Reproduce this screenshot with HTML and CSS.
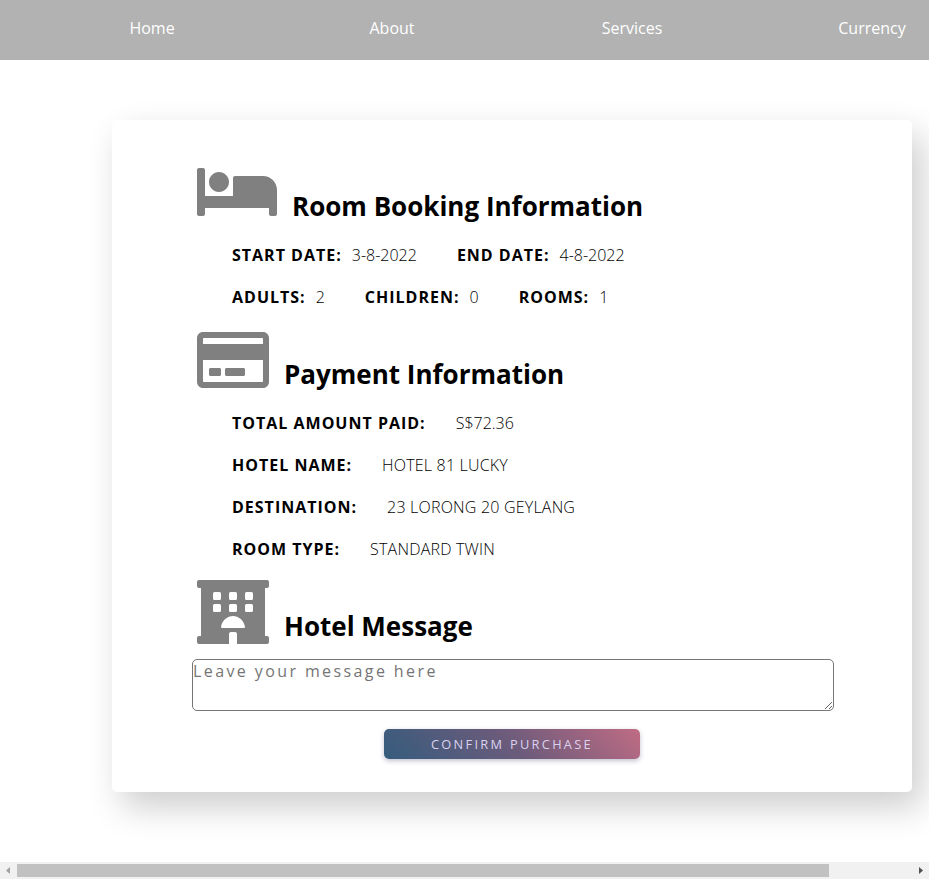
FILE: index.html
```html
<!DOCTYPE html>
<html lang="en">
<head>
<meta charset="utf-8">
<title>Booking confirmation</title>
<link rel="stylesheet" href="styles.css">
</head>
<body>
<div class="viewport">
  <div class="page">
    <nav class="nav">
      <a>Home</a><a>About</a><a>Services</a><a>Currency</a>
    </nav>
    <main class="card">
      <section>
        <header class="head head-bed">
          <svg class="bed" viewBox="0 0 640 512"><path d="M176 256c44.11 0 80-35.89 80-80s-35.89-80-80-80-80 35.89-80 80 35.89 80 80 80zm352-128H304c-8.84 0-16 7.16-16 16v144H64V80c0-8.84-7.16-16-16-16H16C7.16 64 0 71.16 0 80v352c0 8.84 7.16 16 16 16h32c8.84 0 16-7.16 16-16v-48h512v48c0 8.84 7.16 16 16 16h32c8.84 0 16-7.16 16-16V240c0-61.86-50.14-112-112-112z"/></svg>
          <h2>Room Booking Information</h2>
        </header>
        <div class="row tight"><b>START DATE:</b><span>3-8-2022</span><b>END DATE:</b><span>4-8-2022</span></div>
        <div class="row tight"><b>ADULTS:</b><span>2</span><b>CHILDREN:</b><span>0</span><b>ROOMS:</b><span>1</span></div>
      </section>
      <section>
        <header class="head head-pay">
          <svg viewBox="0 0 576 512"><path d="M527.9 32H48.1C21.5 32 0 53.5 0 80v352c0 26.5 21.5 48 48.1 48h479.8c26.6 0 48.1-21.5 48.1-48V80c0-26.5-21.5-48-48.1-48zM54.1 80h467.8c3.3 0 6 2.7 6 6v42H48.1V86c0-3.3 2.7-6 6-6zm467.8 352H54.1c-3.3 0-6-2.7-6-6V256h479.8v170c0 3.3-2.7 6-6 6zM192 332v40c0 6.6-5.4 12-12 12h-72c-6.6 0-12-5.4-12-12v-40c0-6.6 5.4-12 12-12h72c6.6 0 12 5.4 12 12zm192 0v40c0 6.6-5.4 12-12 12H236c-6.6 0-12-5.4-12-12v-40c0-6.6 5.4-12 12-12h136c6.6 0 12 5.4 12 12z"/></svg>
          <h2>Payment Information</h2>
        </header>
        <div class="row"><b>TOTAL AMOUNT PAID:</b><span>S$72.36</span></div>
        <div class="row detail"><b>HOTEL NAME:</b><span>HOTEL 81 LUCKY</span></div>
        <div class="row detail"><b>DESTINATION:</b><span>23 LORONG 20 GEYLANG</span></div>
        <div class="row detail"><b>ROOM TYPE:</b><span>STANDARD TWIN</span></div>
      </section>
      <section>
        <header class="head head-hotel">
          <svg viewBox="0 0 576 512"><path fill-rule="evenodd" d="M560 64c8.84 0 16-7.16 16-16V16c0-8.84-7.16-16-16-16H16C7.16 0 0 7.16 0 16v32c0 8.84 7.16 16 16 16h16v384H16c-8.84 0-16 7.16-16 16v32c0 8.84 7.16 16 16 16h240v-80c0-8.8 7.2-16 16-16h32c8.8 0 16 7.2 16 16v80h240c8.84 0 16-7.16 16-16v-32c0-8.84-7.16-16-16-16h-16V64zM140.800 96h38.400q12.800 0 12.800 12.800v38.400q0 12.800-12.800 12.800h-38.400q-12.800 0-12.800-12.800v-38.400q0-12.800 12.800-12.800zm128 0h38.400q12.800 0 12.800 12.800v38.400q0 12.800-12.800 12.800h-38.400q-12.800 0-12.800-12.800v-38.400q0-12.800 12.800-12.800zm128 0h38.400q12.800 0 12.800 12.800v38.400q0 12.800-12.800 12.800h-38.400q-12.800 0-12.800-12.800v-38.400q0-12.800 12.800-12.800zM140.800 192h38.400q12.800 0 12.800 12.800v38.400q0 12.800-12.800 12.800h-38.400q-12.800 0-12.800-12.800v-38.400q0-12.800 12.800-12.800zm128 0h38.400q12.800 0 12.800 12.800v38.400q0 12.800-12.800 12.800h-38.400q-12.800 0-12.800-12.800v-38.400q0-12.800 12.800-12.800zm128 0h38.400q12.800 0 12.800 12.800v38.400q0 12.800-12.800 12.800h-38.400q-12.800 0-12.800-12.800v-38.400q0-12.800 12.800-12.800zM203 384c-8.800 0-12-7-10-15 12-47 50-81 95-81s83 34 95 81c2 8-1 15-10 15z"/></svg>
          <h2>Hotel Message</h2>
        </header>
        <textarea class="message" placeholder="Leave your message here"></textarea>
        <button class="confirm">CONFIRM PURCHASE</button>
      </section>
    </main>
  </div>
  <div class="scrollbar">
    <svg viewBox="0 0 17 17"><path class="off" d="M10 5v7L6 8.500z"/></svg>
    <div class="track"><div class="thumb"></div></div>
    <svg viewBox="0 0 17 17"><path class="on" d="M7 5v7l4-3.500z"/></svg>
  </div>
</div>
</body>
</html>
```

FILE: styles.css
```css
* { box-sizing: border-box; }
body { margin: 0; font: 16px/24px "Open Sans", sans-serif; color: #000; }
.viewport { display: flex; flex-direction: column; height: 879px; width: 929px; overflow: hidden; background: #fff; }
.page { width: 1024px; flex: 1; min-height: 0; }
.nav { display: grid; grid-template-columns: repeat(4, 240px); width: 1024px; height: 60px; padding: 16px 0 0 32px; background: #b2b2b2; color: #fff; text-align: center; }
.card { width: 800px; height: 672px; margin: 60px auto 0; padding: 40px 78px 0 80px; background: #fff; border-radius: 5px; box-shadow: 10px 15px 35px rgba(0, 0, 0, .2); }
.head { display: flex; align-items: flex-start; padding-left: 5px; gap: 15px; }
.head svg { width: 72px; height: 64px; fill: #808080; flex: none; }
.head svg.bed { width: 80px; }
.head h2 { margin: 28px 0 0; font-size: 26px; line-height: 36px; font-weight: 700; white-space: nowrap; }
.head-bed { height: 74px; }
.head-pay { height: 74px; margin-top: 10px; }
.head-hotel { height: 79px; margin-top: 10px; }
.row { display: flex; height: 42px; padding: 9px 0 0 40px; white-space: nowrap; }
.row b { font-weight: 700; letter-spacing: 1px; }
.row span { font-weight: 300; margin-left: 30px; }
.detail span { letter-spacing: .2px; }
.tight span { margin: 0 40px 0 10px; }
.message { display: block; width: 642px; height: 52px; margin: 0; padding: 0; border: 1px solid #767676; border-radius: 5px; font: 16px/22px "Open Sans", sans-serif; letter-spacing: 2.4px; background: #fff; }
.message::placeholder { color: #757575; }
.confirm { display: block; width: 256px; height: 30px; margin: 18px auto 0 192px; padding: 0; border: 0; border-radius: 5px; color: #dbd2ef; font: 12.8px/30px "Open Sans", sans-serif; letter-spacing: 2.3px; background: linear-gradient(45deg, #355c7d, #6c5b7b, #c06c84); box-shadow: 0 2px 5px rgba(50, 50, 93, .3); }
.scrollbar { display: flex; height: 17px; background: #f1f1f1; }
.scrollbar svg { width: 17px; height: 17px; }
.off { fill: #a3a3a3; }
.on { fill: #505050; }
.track { flex: 1; padding: 2px 0; }
.thumb { width: 812px; height: 13px; background: #c1c1c1; }
```
